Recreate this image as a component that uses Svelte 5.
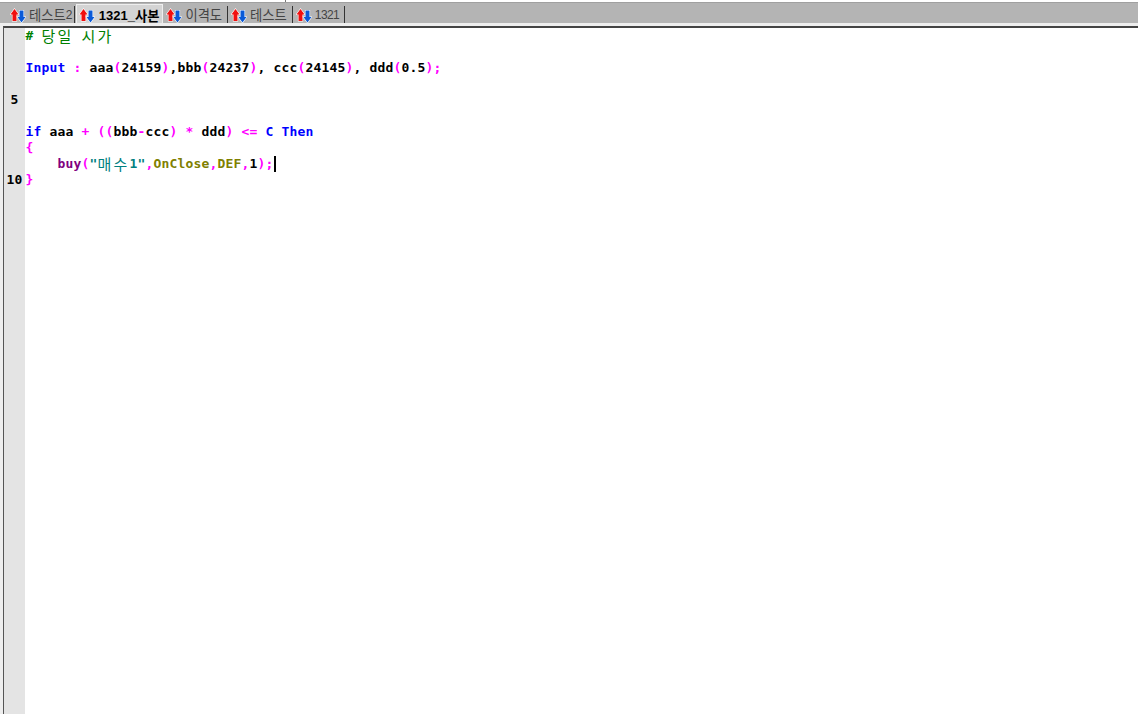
<script>
	const tabs = [
		{ parts: [['ko', '테스트'], ['lat', '2']] },
		{ parts: [['lat', '1321_'], ['ko', '사본']], active: true },
		{ parts: [['ko', '이격도']] },
		{ parts: [['ko', '테스트']] },
		{ parts: [['lat', '1321']] }
	]
</script>

{#snippet arrows()}
	<svg class="arrows" width="16" height="15" viewBox="0 0 16 15">
		<path d="M4.5 1 L8.5 6.5 H6.5 V13 H2.5 V6.5 H0.5 Z" fill="#f01010" stroke="#fff" stroke-width="1.2" paint-order="stroke" />
		<path d="M11.5 14.5 L7.5 9 H9.5 V2.5 H13.5 V9 H15.5 Z" fill="#0a5ad8" stroke="#fff" stroke-width="1.2" paint-order="stroke" />
	</svg>
{/snippet}

<main>
	<div class="topline"><div class="tick"></div></div>
	<div class="tabbar">
		{#each tabs as tab}
			<div class="tab" class:active={tab.active}>
				{@render arrows()}
				<span class="label">
					{#each tab.parts as p}<span class={p[0]}>{p[1]}</span>{/each}
				</span>
			</div>
		{/each}
	</div>
	<div class="frame">
		<div class="pane">
			<div class="gutter">
				<div class="ln"></div>
				<div class="ln"></div>
				<div class="ln"></div>
				<div class="ln"></div>
				<div class="ln">5</div>
				<div class="ln"></div>
				<div class="ln"></div>
				<div class="ln"></div>
				<div class="ln"></div>
				<div class="ln">10</div>
			</div>
			<div class="code">
				<div class="line cm">#{' '}<span class="han">당일</span>{' '}<span class="han">시가</span></div>
				<div class="line"></div>
				<div class="line"><b class="kw">Input</b> <b class="op">:</b> aaa<b class="op">(</b>24159<b class="op">)</b>,bbb<b class="op">(</b>24237<b class="op">)</b>, ccc<b class="op">(</b>24145<b class="op">)</b>, ddd<b class="op">(</b>0.5<b class="op">);</b></div>
				<div class="line"></div>
				<div class="line"></div>
				<div class="line"></div>
				<div class="line"><b class="kw">if</b> aaa <b class="op">+</b> <b class="op">((</b>bbb<b class="op">-</b>ccc<b class="op">)</b> <b class="op">*</b> ddd<b class="op">)</b> <b class="op">&lt;=</b> <b class="kw">C</b> <b class="kw">Then</b></div>
				<div class="line"><b class="op">&#123;</b></div>
				<div class="line">{'    '}<b class="fn">buy</b><b class="op">(</b><span class="str">"<span class="han">매수</span>1"</span><b class="op">,</b><b class="cn">OnClose</b><b class="op">,</b><b class="cn">DEF</b><b class="op">,</b>1<b class="op">);</b><span class="caret"></span></div>
				<div class="line"><b class="op">&#125;</b></div>
			</div>
		</div>
	</div>
</main>

<style>
	:global(body) {
		margin: 0;
		background: #fff;
	}
	main {
		width: 1138px;
		height: 714px;
		display: flex;
		flex-direction: column;
		overflow: hidden;
	}
	.topline {
		height: 2px;
		flex: none;
		padding-left: 285px;
	}
	.tick {
		width: 1px;
		height: 2px;
		background: #777;
	}
	.tabbar {
		height: 21px;
		box-sizing: border-box;
		background: #b4b4b4;
		border-top: 1px solid #a0a0a0;
		display: flex;
		align-items: flex-start;
		padding: 3px 0 0 3px;
		flex: none;
	}
	.tab {
		display: flex;
		align-items: center;
		gap: 3px;
		height: 18px;
		padding: 0 5px 0 3px;
		border-right: 1px solid #333;
		color: #444;
		white-space: nowrap;
	}
	.tab:first-child {
		padding-left: 7px;
		padding-right: 2px;
	}
	.tab.active {
		gap: 4px;
		background: #d4d4d4;
		border: 1px solid #eee;
		border-bottom: none;
		height: 21px;
		margin: -2px 0 0 1px;
		color: #000;
		font-weight: 700;
		padding: 0 3px 0 2px;
	}
	.ko {
		font-family: "Noto Sans CJK KR", sans-serif;
		font-size: 13.3px;
	}
	.lat {
		font-family: "Liberation Sans", sans-serif;
		font-size: 12px;
		letter-spacing: -0.6px;
	}
	.active .lat {
		font-size: 13px;
		letter-spacing: 0;
	}
	.label {
		display: flex;
		align-items: center;
		font-size: 12px;
		line-height: 16px;
	}
	.frame {
		flex: 1;
		display: flex;
		min-height: 0;
		border-top: 3px solid #eee;
		background: #eee;
		padding-left: 3px;
	}
	.pane {
		flex: 1;
		display: flex;
		background: #fff;
		border-top: 2px solid #444;
		border-left: 1px solid #555;
	}
	.gutter {
		width: 21px;
		background: #e4e4e4;
		flex: none;
		text-align: center;
	}
	.ln, .line {
		height: 16px;
		font: 700 13px/16px "DejaVu Sans Mono", "Liberation Mono", monospace;
		letter-spacing: 0.17px;
		white-space: pre;
	}
	.code {
		padding-left: 0.5px;
		color: #000;
	}
	b {
		font-weight: 700;
	}
	.cm {
		color: #008000;
	}
	.han {
		font-family: "Noto Sans CJK KR", sans-serif;
		font-weight: 400;
		font-size: 15px;
		line-height: 0;
		letter-spacing: 2.2px;
		vertical-align: -2px;
	}
	.kw {
		color: #0000ff;
	}
	.op {
		color: #ff00ff;
	}
	.fn {
		color: #800080;
	}
	.cn {
		color: #808000;
	}
	.str {
		color: #008080;
	}
	.caret {
		display: inline-block;
		width: 2px;
		height: 16px;
		background: #000;
		vertical-align: top;
	}
</style>
